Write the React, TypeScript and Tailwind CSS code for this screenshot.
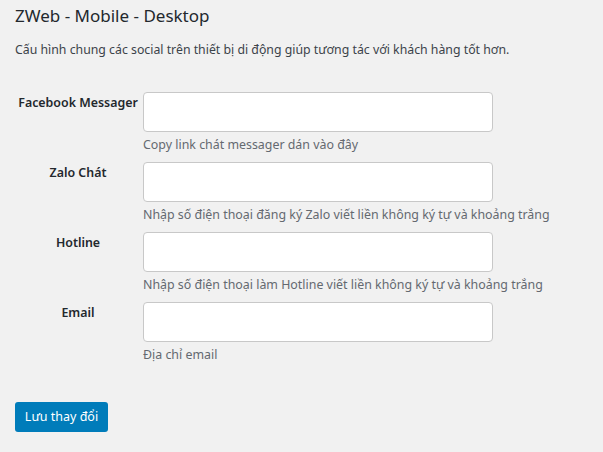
import React from "react";

const fields = [
  { label: "Facebook Messager", help: "Copy link chát messager dán vào đây" },
  { label: "Zalo Chát", help: "Nhập số điện thoại đăng ký Zalo viết liền không ký tự và khoảng trắng" },
  { label: "Hotline", help: "Nhập số điện thoại làm Hotline viết liền không ký tự và khoảng trắng" },
  { label: "Email", help: "Địa chỉ email" },
];

export default function App() {
  return (
    <div className="min-h-[452px] w-full bg-[#f1f1f1] px-[15px] pt-[5px] text-[#23282d] [font-family:'Noto_Sans',sans-serif]">
      <h2 className="text-[17px] leading-[22px] font-normal">ZWeb - Mobile - Desktop</h2>
      <p className="mt-[14px] text-[12.3px] leading-[18px] text-[#3c434a]">
        Cấu hình chung các social trên thiết bị di động giúp tương tác với khách hàng tốt hơn.
      </p>

      <div className="mt-[33px] flex flex-col gap-[8px]">
        {fields.map((f) => (
          <div key={f.label} className="flex">
            <div className="w-[126px] shrink-0 whitespace-nowrap pt-[2px] text-center text-[12.4px] leading-[18px] font-semibold">
              {f.label}
            </div>
            <div className="ml-[2px] flex flex-col">
              <input
                type="text"
                className="h-[40px] w-[350px] rounded-[4px] border border-[#c8c8c8] bg-white px-2 text-[14px] outline-none"
              />
              <p className="mt-[4px] text-[12.4px] leading-[18px] text-[#646970]">{f.help}</p>
            </div>
          </div>
        ))}
      </div>

      <button
        type="button"
        className="mt-[38px] h-[30px] w-[93px] rounded-[3px] bg-[#007cba] text-[12.5px] text-white"
      >
        Lưu thay đổi
      </button>
    </div>
  );
}
